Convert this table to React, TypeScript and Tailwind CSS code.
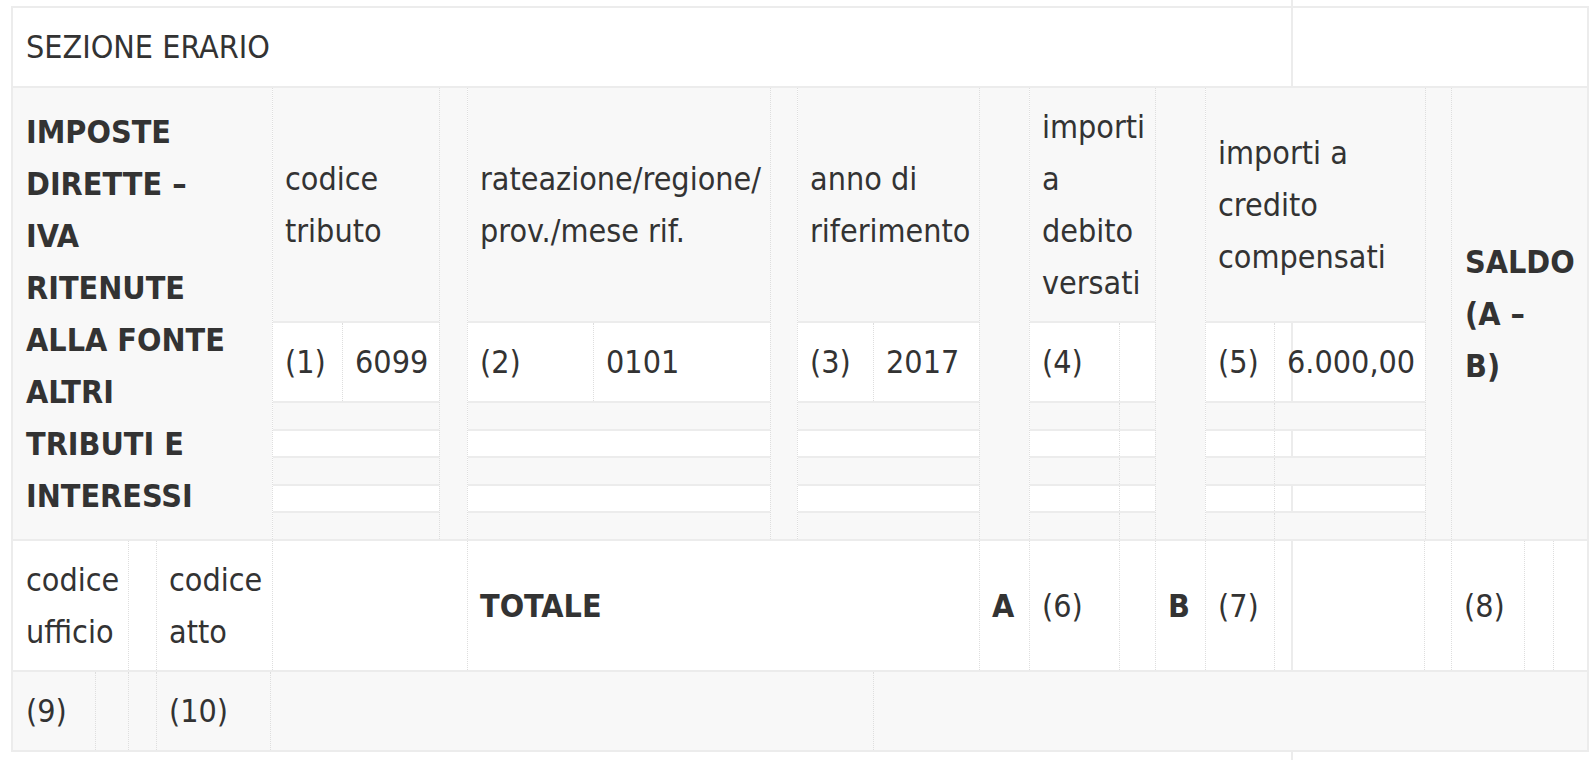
import type { ReactNode } from 'react';

// F24 "Sezione Erario" block, rebuilt as nested flex rows/columns.

const dotted = 'border-l border-dotted border-[#dedede]';
const rule = 'border-t-2 border-[#ececec]';
const gray = 'bg-[#f8f8f8]';

function Cell({ w, first, bold, children, className = '' }: { w: string; first?: boolean; bold?: boolean; children?: ReactNode; className?: string }) {
  return (
    <div className={`flex items-center whitespace-nowrap ${w} ${first ? '' : dotted} ${bold ? 'font-bold' : ''} ${className || 'px-[12px]'}`}>
      {children}
    </div>
  );
}

// a column of the big row: header text, a data row and five thin rows
function Column({ w, header, left, right, split, thinSplit }: { w: string; header: ReactNode; left: string; right: string; split: [string, string]; thinSplit?: boolean }) {
  const thin = [true, false, true, false, true];
  return (
    <div className={`flex flex-col ${w} ${dotted}`}>
      <div className={`flex flex-1 items-center px-[12px] whitespace-nowrap ${gray}`}>{header}</div>
      <div className={`flex h-[80px] ${rule}`}>
        <Cell w={split[0]} first>{left}</Cell>
        <Cell w={split[1]}>{right}</Cell>
      </div>
      {thin.map((isGray, i) => (
        <div key={i} className={`flex h-[27.6px] ${rule} ${isGray ? gray : ''}`}>
          {thinSplit && (
            <>
              <div className={split[0]} />
              <div className={`${split[1]} ${dotted}`} />
            </>
          )}
        </div>
      ))}
    </div>
  );
}

function Gap({ w }: { w: string }) {
  return <div className={`${w} ${dotted} ${gray}`} />;
}

export default function App() {
  return (
    <div className="relative isolate min-h-[760px] bg-white pt-[6px] pl-[11px] font-['DejaVu_Sans_Condensed','DejaVu_Sans',sans-serif] font-stretch-condensed text-[32px] leading-[52px] text-[#333333]">
      <div className="absolute -z-10 top-0 bottom-0 left-[1291px] w-[2px] bg-[#ececec]" />

      <div className="w-[1578px] border-2 border-[#ececec]">
        <div className="flex h-[78px] items-center px-[13px]">SEZIONE ERARIO</div>

        <div className={`flex h-[453px] ${rule}`}>
          <div className={`flex w-[259px] items-center px-[13px] font-bold whitespace-nowrap ${gray}`}>
            <div>
              IMPOSTE<br />DIRETTE –<br />IVA<br />RITENUTE<br />ALLA FONTE<br />ALTRI<br />TRIBUTI E<br />INTERESSI
            </div>
          </div>
          <Column w="w-[167px]" header={<div>codice<br />tributo</div>} left="(1)" right="6099" split={['w-[69px]', 'w-[97px]']} />
          <Gap w="w-[28px]" />
          <Column w="w-[303px]" header={<div>rateazione/regione/<br />prov./mese rif.</div>} left="(2)" right="0101" split={['w-[125px]', 'w-[177px]']} />
          <Gap w="w-[27px]" />
          <Column w="w-[182px]" header={<div>anno di<br />riferimento</div>} left="(3)" right="2017" split={['w-[75px]', 'w-[106px]']} />
          <Gap w="w-[50px]" />
          <Column w="w-[126px]" header={<div>importi<br />a<br />debito<br />versati</div>} left="(4)" right="" split={['w-[89px]', 'w-[36px]']} thinSplit />
          <Gap w="w-[50px]" />
          <Column w="w-[220px]" header={<div>importi a<br />credito<br />compensati</div>} left="(5)" right="6.000,00" split={['w-[68px]', 'w-[151px]']} thinSplit />
          <Gap w="w-[26px]" />
          <div className={`flex w-[136px] items-center px-[13px] font-bold whitespace-nowrap ${gray} ${dotted}`}>
            <div>SALDO<br />(A –<br />B)</div>
          </div>
        </div>

        <div className={`flex h-[131px] ${rule}`}>
          <Cell w="w-[115px]" first className="px-[13px]"><div>codice<br />ufficio</div></Cell>
          <Cell w="w-[28px]" />
          <Cell w="w-[116px]"><div>codice<br />atto</div></Cell>
          <Cell w="w-[195px]" />
          <Cell w="w-[512px]" bold>TOTALE</Cell>
          <Cell w="w-[50px]" bold>A</Cell>
          <Cell w="w-[90px]">(6)</Cell>
          <Cell w="w-[36px]" />
          <Cell w="w-[50px]" bold>B</Cell>
          <Cell w="w-[69px]">(7)</Cell>
          <Cell w="w-[150px]" />
          <Cell w="w-[27px]" />
          <Cell w="w-[73px]">(8)</Cell>
          <Cell w="w-[29px]" />
          <Cell w="w-[34px]" />
        </div>

        <div className={`flex h-[80px] ${rule} ${gray}`}>
          <Cell w="w-[82px]" first className="px-[13px]">(9)</Cell>
          <Cell w="w-[33px]" />
          <Cell w="w-[28px]" />
          <Cell w="w-[114px]">(10)</Cell>
          <Cell w="w-[603px]" />
          <Cell w="w-[714px]" />
        </div>
      </div>
    </div>
  );
}
